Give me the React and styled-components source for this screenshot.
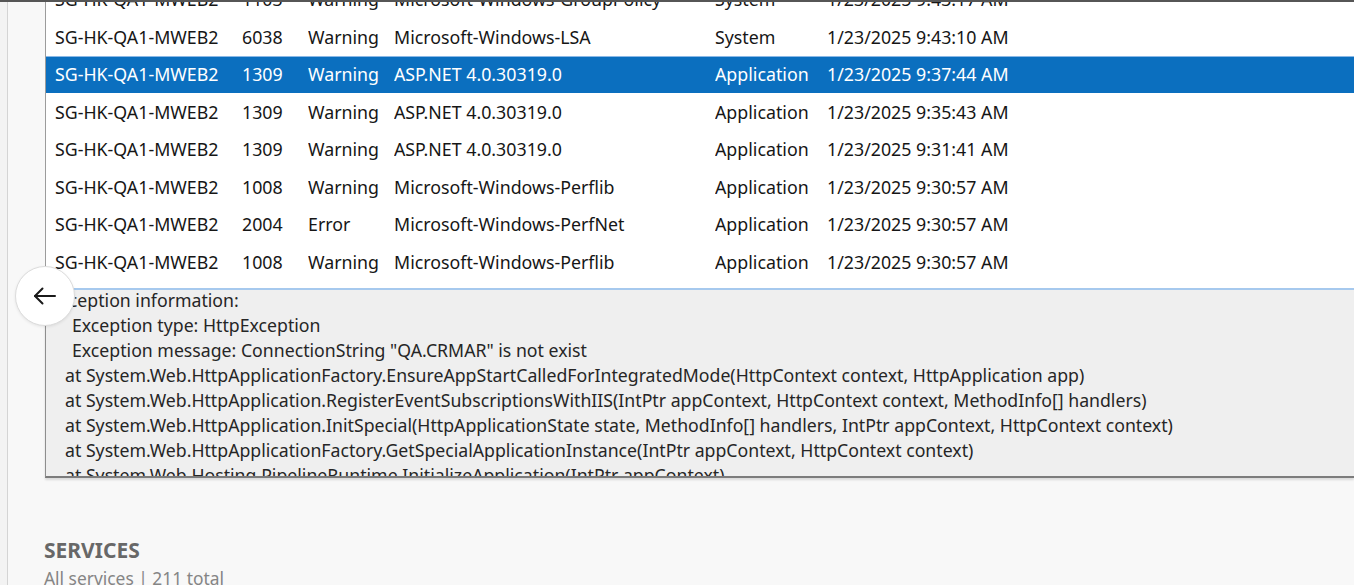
import React from 'react';
import styled, { createGlobalStyle } from 'styled-components';

const GlobalStyle = createGlobalStyle`
  html, body { margin: 0; padding: 0; background: #f8f8f8; overflow: hidden; }
  body { font-family: "Noto Sans", "Open Sans", sans-serif; }
  * { box-sizing: border-box; }
`;

const Page = styled.div`
  display: flex;
  height: 585px;
  border-top: 2px solid #565656;
  background: #f8f8f8;
`;

const Rail = styled.div`
  width: 8px;
  flex: none;
  border-right: 1px solid #d4d4d4;
  background: #f3f3f3;
`;

const Main = styled.div`
  flex: 1;
  min-width: 0;
  display: flex;
  flex-direction: column;
  padding-left: 37px;
`;

const EventPanel = styled.div`
  position: relative;
  display: flex;
  flex-direction: column;
`;

const ListViewport = styled.div`
  height: 286px;
  overflow: hidden;
  background: #fff;
  border-left: 1px solid #9c9c9c;
`;

const Rows = styled.div`
  margin-top: -21.5px;
`;

const Row = styled.div`
  display: grid;
  grid-template-columns: 187px 66px 86px 321px 112px 1fr;
  height: 37.5px;
  align-items: center;
  padding-left: 9px;
  font-size: 17.8px;
  white-space: nowrap;
  color: ${(p) => (p.$selected ? '#ffffff' : '#161616')};
  background: ${(p) => (p.$selected ? '#0b6fbf' : 'transparent')};
  box-shadow: ${(p) => (p.$selected ? 'inset 0 1px 0 #8ab8e6' : 'none')};
`;

const Cell = styled.span`
  overflow: hidden;
`;

const DetailPane = styled.div`
  height: 190px;
  overflow: hidden;
  background: #efefef;
  border-top: 2px solid #a6c9ee;
  border-left: 1px solid #8e8e8e;
  border-bottom: 2px solid #7c7c7c;
  box-shadow: 0 2px 2px rgba(0, 0, 0, 0.12);
  padding-left: 4px;
  padding-top: 0;
`;

const DetailLines = styled.div`
  margin-top: -2px;
`;

const DetailLine = styled.div`
  font-size: 17.7px;
  line-height: 25px;
  height: 25px;
  color: #262626;
  white-space: nowrap;
  padding-left: ${(p) => p.$indent || 0}px;
`;

const BackButton = styled.button`
  position: absolute;
  left: -30px;
  top: 264px;
  width: 60px;
  height: 60px;
  border-radius: 50%;
  background: #ffffff;
  border: 1px solid #dcdcdc;
  box-shadow: 0 1px 3px rgba(0, 0, 0, 0.08);
  display: flex;
  align-items: center;
  justify-content: center;
  padding: 0;
  cursor: pointer;
`;

const Services = styled.section`
  margin-top: 59px;
  margin-left: -1px;
`;

const ServicesTitle = styled.h2`
  margin: 0;
  font-size: 21px;
  line-height: 26px;
  font-weight: 700;
  color: #686868;
`;

const ServicesSub = styled.div`
  margin-top: 4px;
  font-size: 17.4px;
  line-height: 22px;
  color: #858585;
`;

const rows = [
  ['SG-HK-QA1-MWEB2', '1103', 'Warning', 'Microsoft-Windows-GroupPolicy', 'System', '1/23/2025 9:43:17 AM'],
  ['SG-HK-QA1-MWEB2', '6038', 'Warning', 'Microsoft-Windows-LSA', 'System', '1/23/2025 9:43:10 AM'],
  ['SG-HK-QA1-MWEB2', '1309', 'Warning', 'ASP.NET 4.0.30319.0', 'Application', '1/23/2025 9:37:44 AM', true],
  ['SG-HK-QA1-MWEB2', '1309', 'Warning', 'ASP.NET 4.0.30319.0', 'Application', '1/23/2025 9:35:43 AM'],
  ['SG-HK-QA1-MWEB2', '1309', 'Warning', 'ASP.NET 4.0.30319.0', 'Application', '1/23/2025 9:31:41 AM'],
  ['SG-HK-QA1-MWEB2', '1008', 'Warning', 'Microsoft-Windows-Perflib', 'Application', '1/23/2025 9:30:57 AM'],
  ['SG-HK-QA1-MWEB2', '2004', 'Error', 'Microsoft-Windows-PerfNet', 'Application', '1/23/2025 9:30:57 AM'],
  ['SG-HK-QA1-MWEB2', '1008', 'Warning', 'Microsoft-Windows-Perflib', 'Application', '1/23/2025 9:30:57 AM'],
];

const detail = [
  [0, 'Exception information:'],
  [22, 'Exception type: HttpException'],
  [22, 'Exception message: ConnectionString "QA.CRMAR" is not exist'],
  [15, 'at System.Web.HttpApplicationFactory.EnsureAppStartCalledForIntegratedMode(HttpContext context, HttpApplication app)'],
  [15, 'at System.Web.HttpApplication.RegisterEventSubscriptionsWithIIS(IntPtr appContext, HttpContext context, MethodInfo[] handlers)'],
  [15, 'at System.Web.HttpApplication.InitSpecial(HttpApplicationState state, MethodInfo[] handlers, IntPtr appContext, HttpContext context)'],
  [15, 'at System.Web.HttpApplicationFactory.GetSpecialApplicationInstance(IntPtr appContext, HttpContext context)'],
  [15, 'at System.Web.Hosting.PipelineRuntime.InitializeApplication(IntPtr appContext)'],
];

const ArrowLeft = () => (
  <svg width="24" height="18" viewBox="0 0 24 18" fill="none" stroke="#1a1a1a" strokeWidth="2" strokeLinecap="round" strokeLinejoin="round">
    <path d="M22 9H2" />
    <path d="M9.5 1.5L2 9l7.5 7.5" />
  </svg>
);

export default function App() {
  return (
    <>
      <GlobalStyle />
      <Page>
        <Rail />
        <Main>
          <EventPanel>
            <ListViewport>
              <Rows>
                {rows.map((r, i) => (
                  <Row key={i} $selected={r[6]}>
                    {r.slice(0, 6).map((c, j) => (
                      <Cell key={j}>{c}</Cell>
                    ))}
                  </Row>
                ))}
              </Rows>
            </ListViewport>
            <DetailPane>
              <DetailLines>
                {detail.map(([indent, text], i) => (
                  <DetailLine key={i} $indent={indent}>{text}</DetailLine>
                ))}
              </DetailLines>
            </DetailPane>
            <BackButton aria-label="Back">
              <ArrowLeft />
            </BackButton>
          </EventPanel>
          <Services>
            <ServicesTitle>SERVICES</ServicesTitle>
            <ServicesSub>All services | 211 total</ServicesSub>
          </Services>
        </Main>
      </Page>
    </>
  );
}
